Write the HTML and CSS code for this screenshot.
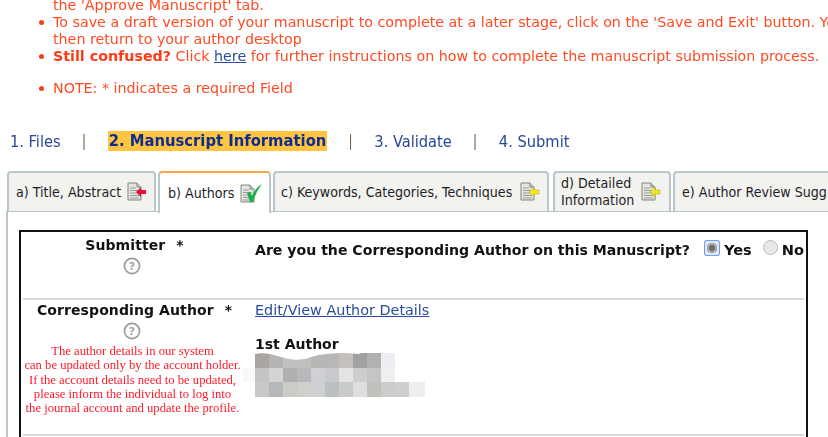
FILE: index.html
```
<!DOCTYPE html>
<html lang="en">
<head>
<meta charset="utf-8">
<title>Manuscript Information</title>
<link rel="stylesheet" href="styles.css">
</head>
<body>
<svg class="defs" width="0" height="0" aria-hidden="true">
  <defs>
    <g id="doc">
      <path d="M1 1h9l4 4v13H1z" fill="#e4e4e0" stroke="#85857f"/>
      <path d="M10 1v4h4" fill="#c9c9c6" stroke="#85857f"/>
      <path d="M3 6h6M3 8.500h9M3 11h9M3 13.500h9M3 16h9" stroke="#9c9c98" stroke-width="1"/>
    </g>
  </defs>
</svg>
<div class="page">
  <ul class="notes">
    <li>the 'Approve Manuscript' tab.</li>
    <li class="bullet">To save a draft version of your manuscript to complete at a later stage, click on the 'Save and Exit' button. You<br>then return to your author desktop</li>
    <li class="bullet"><b>Still confused?</b> Click <a href="#">here</a> for further instructions on how to complete the manuscript submission process.</li>
    <li class="bullet note">NOTE: * indicates a required Field</li>
  </ul>

  <nav class="steps">
    <a href="#" class="step">1. Files</a><span class="sep">|</span>
    <a href="#" class="step current">2. Manuscript Information</a><span class="sep">|</span>
    <a href="#" class="step">3. Validate</a><span class="sep">|</span>
    <a href="#" class="step">4. Submit</a>
  </nav>

  <div class="tabs">
    <div class="tab tab-a"><span>a) Title, Abstract</span>
      <svg class="tab-icon" viewBox="0 0 20 20"><use href="#doc"/><path d="M19 8h-5V5l-5 5 5 5v-3h5z" fill="#e8112d"/></svg></div>
    <div class="tab tab-b active"><span>b) Authors</span>
      <svg class="tab-icon tab-icon-wide" viewBox="0 0 23 20"><use href="#doc" transform="translate(0 1)"/><path d="M7 10l3-1 2 4c2-5 6-10 10-12-4 5-7 11-9 18h-3z" fill="#17b24c"/></svg></div>
    <div class="tab tab-c"><span>c) Keywords, Categories, Techniques</span>
      <svg class="tab-icon" viewBox="0 0 20 20"><use href="#doc"/><path d="M9 10l5-5v3h5v4h-5v3z" fill="#f3e81b" stroke="#a8a23a" stroke-width=".5"/></svg></div>
    <div class="tab tab-d"><span>d) Detailed<br>Information</span>
      <svg class="tab-icon" viewBox="0 0 20 20"><use href="#doc"/><path d="M9 10l5-5v3h5v4h-5v3z" fill="#f3e81b" stroke="#a8a23a" stroke-width=".5"/></svg></div>
    <div class="tab tab-e"><span>e) Author Review Sugg</span></div>
  </div>

  <div class="panel">
    <div class="box">
      <section class="row row-submitter">
        <div class="label">
          <h3>Submitter <span class="star">*</span></h3>
          <svg class="help" viewBox="0 0 18 18"><circle cx="9" cy="9" r="7.600" fill="#fff" stroke="#9a9a9a" stroke-width="1.600"/><text x="9" y="13" text-anchor="middle" class="help-q">?</text></svg>
        </div>
        <div class="field question">
          <span class="ask">Are you the Corresponding Author on this Manuscript?</span>
          <label class="choice"><input class="radio focused" type="radio" name="corr" checked>Yes</label>
          <label class="choice"><input class="radio" type="radio" name="corr">No</label>
        </div>
      </section>
      <section class="row row-author">
        <div class="label">
          <h3>Corresponding Author <span class="star">*</span></h3>
          <svg class="help" viewBox="0 0 18 18"><circle cx="9" cy="9" r="7.600" fill="#fff" stroke="#9a9a9a" stroke-width="1.600"/><text x="9" y="13" text-anchor="middle" class="help-q">?</text></svg>
          <p class="warn">The author details in our system<br>can be updated only by the account holder.<br>If the account details need to be updated,<br>please inform the individual to log into<br>the journal account and update the profile.</p>
        </div>
        <div class="field">
          <a href="#" class="edit">Edit/View Author Details</a>
          <h4>1st Author</h4>
          <svg class="mosaic" viewBox="-12 0 184 44" aria-hidden="true">
            <rect x="-12" y="15" width="12" height="14" fill="#f9f8f7"/>
            <rect x="0" y="0" width="14" height="15" fill="#a9a6a1"/><rect x="14" y="0" width="14" height="15" fill="#b4b4b2"/><rect x="28" y="0" width="14" height="15" fill="#bfc0c0"/><rect x="42" y="0" width="14" height="15" fill="#c0c0bc"/><rect x="56" y="0" width="14" height="15" fill="#b6b6b4"/><rect x="70" y="0" width="14" height="15" fill="#b7b7b5"/><rect x="84" y="0" width="14" height="15" fill="#c4c1bd"/><rect x="98" y="0" width="14" height="15" fill="#a1a1a0"/><rect x="112" y="0" width="14" height="15" fill="#b0b2b1"/><rect x="126" y="0" width="14" height="15" fill="#eceef1"/>
            <rect x="0" y="15" width="14" height="14" fill="#c4c4c2"/><rect x="14" y="15" width="14" height="14" fill="#d4d4d4"/><rect x="28" y="15" width="14" height="14" fill="#b0b0b0"/><rect x="42" y="15" width="14" height="14" fill="#b8b8ba"/><rect x="56" y="15" width="14" height="14" fill="#d0d1d4"/><rect x="70" y="15" width="14" height="14" fill="#c8c9cb"/><rect x="84" y="15" width="14" height="14" fill="#e4e4e4"/><rect x="98" y="15" width="14" height="14" fill="#cfcecc"/><rect x="112" y="15" width="14" height="14" fill="#c5c5c3"/><rect x="126" y="15" width="14" height="14" fill="#eeeff1"/>
            <rect x="0" y="29" width="14" height="15" fill="#c9c8c6"/><rect x="14" y="29" width="14" height="15" fill="#b5b8bb"/><rect x="28" y="29" width="14" height="15" fill="#cbcbc7"/><rect x="42" y="29" width="14" height="15" fill="#cfcfcb"/><rect x="56" y="29" width="14" height="15" fill="#ced0d3"/><rect x="70" y="29" width="14" height="15" fill="#bcbfbf"/><rect x="84" y="29" width="14" height="15" fill="#c8cbca"/><rect x="98" y="29" width="14" height="15" fill="#dedede"/><rect x="112" y="29" width="14" height="15" fill="#c0c0bc"/><rect x="126" y="29" width="14" height="15" fill="#cccccb"/><rect x="140" y="29" width="14" height="15" fill="#cdcfcd"/><rect x="154" y="29" width="16" height="15" fill="#eeeeee"/>
            <path d="M0 -1V1C8 -1 16 1 26 4C36 7 46 8 56 4C66 1 76 0 90 0L104 1L108 -1z" fill="#fff"/>
          </svg>
        </div>
      </section>
    </div>
  </div>
</div>
</body>
</html>
```
FILE: styles.css
```
* { box-sizing: border-box; }
html, body { margin: 0; padding: 0; height: 100%; overflow: hidden; background: #fff; }
.defs { position: absolute; }
.page { width: 828px; height: 437px; overflow: hidden; font-family: "DejaVu Sans", sans-serif; color: #111; filter: blur(.3px); }

.notes { list-style: none; margin: -3px 0 0; padding: 0 0 0 53px; font-size: 14.250px; line-height: 17px; color: #ff4a22; white-space: nowrap; }
.notes li { position: relative; }
.notes .bullet::before { content: ""; position: absolute; left: -14px; top: 6px; width: 5px; height: 5px; border-radius: 50%; background: #f5401c; }
.notes .note { margin-top: 15px; }
.notes a { color: #2a4c9c; }
.notes b { color: #ff3a14; }

.steps { display: flex; align-items: center; height: 24px; margin-top: 32px; padding-left: 10px; font-family: "DejaVu Sans Condensed", sans-serif; font-size: 16.300px; white-space: nowrap; }
.step { color: #26489a; text-decoration: none; }
.sep { flex: none; width: 5px; margin: 0 21px; color: #7d6650; font-size: 15px; }
.current { background: #ffc440; color: #0e2e8e; font-weight: bold; font-size: 16.450px; padding: 0 1px; line-height: 20px; }

.tabs { display: flex; align-items: flex-end; gap: 2px; height: 42px; margin: 17px 0 0 7px; font-family: "DejaVu Sans Condensed", sans-serif; font-size: 14.100px; line-height: 17px; color: #1d1d28; white-space: nowrap; }
.tab { display: flex; align-items: center; flex: none; height: 41px; padding-left: 8px; background: #f2f2ee; border: 1px solid #b9c6cd; border-width: 2px 2px 1px; border-radius: 4px 4px 0 0; position: relative; }
.tab-a { width: 149px; gap: 6px; padding-left: 7px; }
.tab-b { width: 113px; gap: 6px; padding-left: 8px; background: #fff; height: 42px; border-top: 2px solid #f5a93a; border-bottom: 0; z-index: 1; margin-bottom: -1px; }
.tab-c { width: 276px; gap: 8px; padding-left: 6px; }
.tab-d { width: 118px; gap: 7px; margin-left: 2px; padding-left: 6px; }
.tab-e { width: 200px; padding-left: 7px; }
.tab-icon { width: 20px; height: 20px; flex: none; }
.tab-icon-wide { width: 23px; }

.panel { height: 240px; margin: -1px 0 0 6px; padding: 18px 0 0 11px; border-left: 2px solid #b9c6cd; border-top: 1px solid #b9c6cd; }
.box { width: 789px; height: 240px; border: 2px solid #111; border-bottom: 0; padding: 0 2px; background: #fff; }
.row { display: grid; grid-template-columns: 223px 1fr; width: 781px; border-bottom: 2px solid #d9d9d9; }
.row-submitter { height: 68px; }
.row-author { height: 136px; }
.label { display: flex; flex-direction: column; align-items: center; font-size: 14px; }
.label h3 { margin: 0; font-size: 14px; line-height: 17px; font-weight: bold; letter-spacing: .1px; color: #111; white-space: pre; }
.row-submitter h3 { margin-top: 5px; }
.row-author h3 { margin-top: 2px; }
.star { margin-left: 6px; }
.help { width: 18px; height: 18px; margin: 3px 6px 0 0; }
.help-q { font: bold 11px "DejaVu Sans", sans-serif; fill: #a2a2a2; }
.warn { margin: 4px 4px 0 0; font: 12.650px/14.250px "Liberation Serif", serif; color: #ff1a2a; text-align: center; white-space: nowrap; }
.field { padding: 0 0 0 9px; }
.question { display: flex; align-items: center; height: 33px; font-size: 14.100px; font-weight: bold; white-space: nowrap; padding-top: 2px; }
.ask { margin-right: 14px; }
.choice { display: inline-flex; align-items: center; margin-right: 11px; font-size: 14.600px; }
.radio { appearance: none; width: 15px; height: 15px; margin: -4px 4px 0 0; border: 1px solid #bbb; border-radius: 50%; background: #e8e8e8; position: relative; }
.radio.focused { width: 16px; height: 16px; margin-right: 4px; border: 1px solid #6f9fe6; border-radius: 2px; background: #dde6f2; }
.radio.focused::after { content: ""; position: absolute; left: 2px; top: 2px; width: 10px; height: 10px; border-radius: 50%; background: #6d6d6d; box-shadow: inset 0 0 0 2px #a9a9a9; }
.edit { display: block; margin-top: 2px; font-size: 14.400px; line-height: 17px; color: #2a4c9c; }
.field h4 { margin: 17px 0 0; font-size: 14px; line-height: 17px; font-weight: bold; color: #111; }
.mosaic { display: block; width: 184px; height: 44px; margin-left: -12px; }
```
